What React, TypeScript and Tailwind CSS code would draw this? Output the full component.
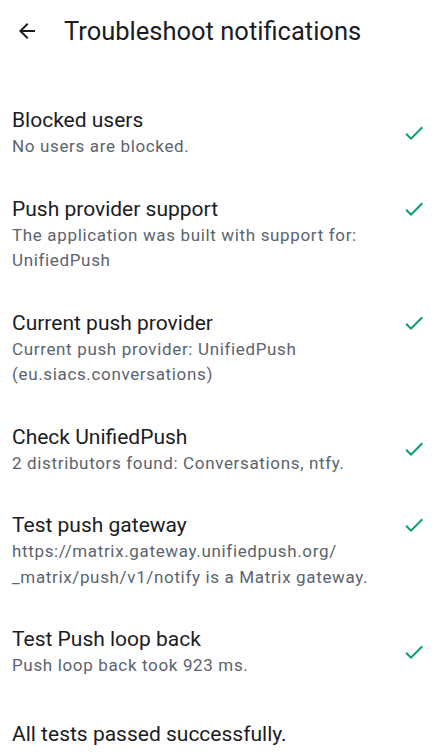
import React from "react";

const items: { title: string; lines: string[] }[] = [
  { title: "Blocked users", lines: ["No users are blocked."] },
  { title: "Push provider support", lines: ["The application was built with support for:", "UnifiedPush"] },
  { title: "Current push provider", lines: ["Current push provider: UnifiedPush", "(eu.siacs.conversations)"] },
  { title: "Check UnifiedPush", lines: ["2 distributors found: Conversations, ntfy."] },
  { title: "Test push gateway", lines: ["https://matrix.gateway.unifiedpush.org/", "_matrix/push/v1/notify is a Matrix gateway."] },
  { title: "Test Push loop back", lines: ["Push loop back took 923 ms."] },
];

function Check({ top }: { top: boolean }) {
  return (
    <svg width="24" height="24" viewBox="0 0 24 24" className={top ? "shrink-0 self-start mt-[2px]" : "shrink-0"}>
      <path d="M9 16.17L4.83 12l-1.42 1.41L9 19 21 7l-1.41-1.41z" fill="#0a9e70" />
    </svg>
  );
}

export default function App() {
  return (
    <div className="w-[439px] h-[755px] bg-white overflow-hidden" style={{ fontFamily: "Roboto, 'Noto Sans', sans-serif" }}>
      <div className="h-[62px] flex items-center">
        <div className="w-[64px] flex items-center pl-[15px]">
          <svg width="24" height="24" viewBox="0 0 24 24">
            <path d="M20 11H7.83l5.59-5.59L12 4l-8 8 8 8 1.41-1.41L7.83 13H20v-2z" fill="#1b1c1f" />
          </svg>
        </div>
        <div className="text-[25.5px] leading-[32px] text-[#1b1c1f]">Troubleshoot notifications</div>
      </div>
      <div className="pt-[26.5px]">
        {items.map((it) => (
          <div key={it.title} className="flex items-center pl-3 pr-[13px] py-[17.5px]">
            <div className="flex-1">
              <div className="text-[21px] leading-[28px] text-[#1b1c1f]">{it.title}</div>
              {it.lines.map((l) => (
                <div key={l} className="text-[17px] leading-[25.5px] tracking-[0.65px] text-[#5c6370]">{l}</div>
              ))}
            </div>
            <Check top={it.lines.length > 1} />
          </div>
        ))}
        <div className="pl-3 pt-[24px] text-[21px] leading-[28px] text-[#1b1c1f]">All tests passed successfully.</div>
      </div>
    </div>
  );
}
